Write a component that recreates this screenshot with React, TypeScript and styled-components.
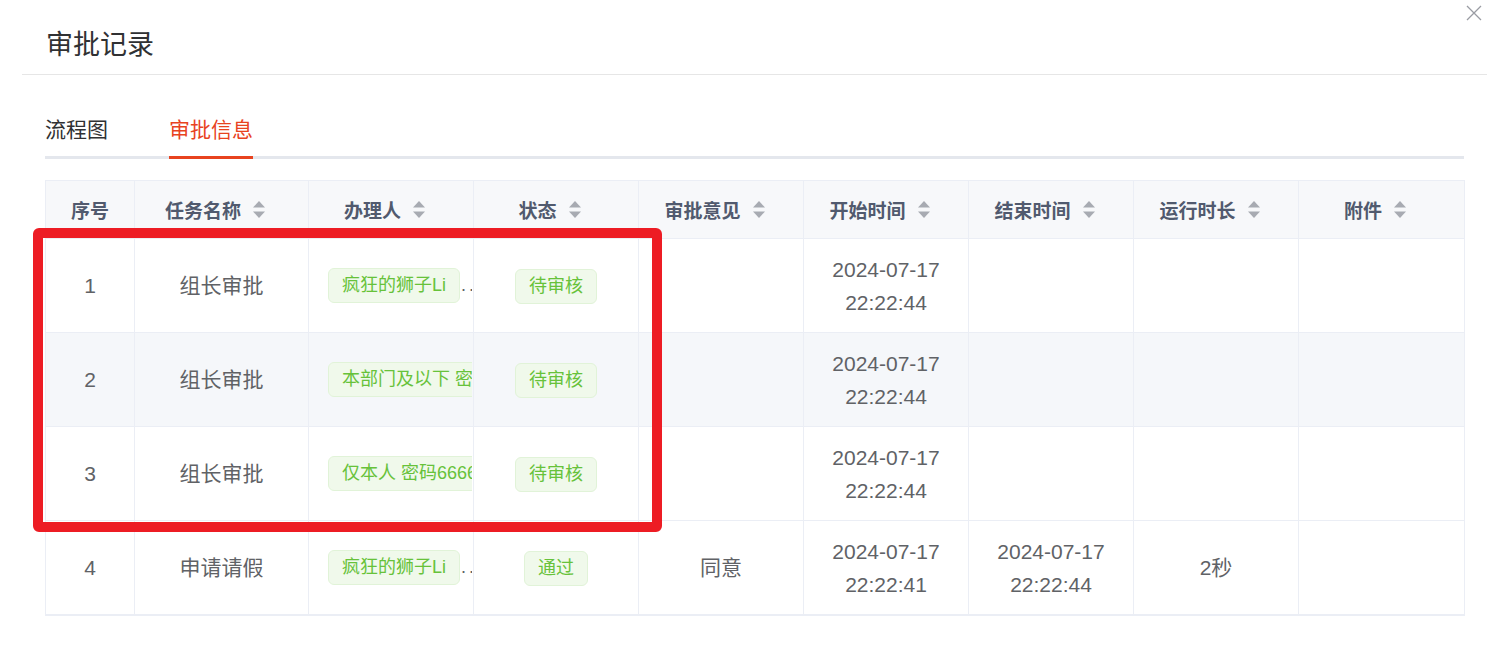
import styled, { createGlobalStyle } from 'styled-components';

const GlobalStyle = createGlobalStyle`
    body {
        margin: 0;
        background: #fff;
        font-family: 'Liberation Sans', 'Noto Sans CJK SC', sans-serif;
    }
`;

interface ActiveProps {
    $active?: boolean;
}

interface CellProps {
    $align?: 'left' | 'center';
}

interface HeadProps {
    $sortable?: boolean;
}

interface RowProps {
    $striped?: boolean;
}

const Dialog = styled.div`
    position: relative;
    width: 1495px;
    height: 650px;
    background: #fff;
    overflow: hidden;
`;

const Header = styled.div`
    margin: 0 8px 0 22px;
    height: 74px;
    padding-left: 24px;
    border-bottom: 1px solid #e6e6e6;
    box-sizing: content-box;
`;

const Title = styled.h2`
    margin: 0;
    padding-top: 27px;
    font-size: 27px;
    line-height: 36px;
    font-weight: 400;
    color: #303133;
`;

const CloseButton = styled.button`
    position: absolute;
    top: 4px;
    right: 12px;
    width: 18px;
    height: 18px;
    padding: 0;
    border: none;
    background: transparent;
    display: flex;
    align-items: center;
    justify-content: center;
    cursor: pointer;
`;

const Body = styled.div`
    padding: 35px 31px 0 45px;
`;

const TabNav = styled.div`
    display: flex;
    gap: 61px;
    border-bottom: 3px solid #e4e7ed;
`;

const Tab = styled.div<ActiveProps>`
    height: 46px;
    line-height: 40px;
    font-size: 21px;
    color: ${(props) => (props.$active ? '#e8431f' : '#303133')};
    box-shadow: ${(props) => (props.$active ? 'inset 0 -3px 0 #e8431f' : 'none')};
    margin-bottom: -3px;
    padding-bottom: 3px;
    box-sizing: content-box;
`;

const TableWrap = styled.div`
    position: relative;
    margin-top: 21px;
    width: 1419px;
`;

const Table = styled.table`
    width: 100%;
    table-layout: fixed;
    border-collapse: collapse;
    border: 1px solid #ebeef5;
    border-bottom: 2px solid #ebeef5;
`;

const HeadCell = styled.th<HeadProps>`
    height: 57px;
    padding: ${(props) => (props.$sortable ? '0 20px 0 8px' : '0 8px')};
    background: #f7f8fa;
    border: 1px solid #ebeef5;
    font-size: 19px;
    font-weight: 700;
    color: #515a6e;
    text-align: center;
    white-space: nowrap;
`;

const HeadInner = styled.span`
    display: inline-flex;
    align-items: center;
    gap: 11px;
`;

const Row = styled.tr<RowProps>`
    background: ${(props) => (props.$striped ? '#f5f7fa' : '#fff')};
`;

const Cell = styled.td<CellProps>`
    height: 93px;
    padding: 0 18px;
    border: 1px solid #ebeef5;
    font-size: 21px;
    line-height: 33px;
    color: #606266;
    text-align: ${(props) => props.$align || 'center'};
`;

const Clip = styled.div`
    margin-left: 1px;
    margin-right: -17px;
    white-space: nowrap;
    overflow: hidden;
    display: flex;
    align-items: center;
`;

const Tag = styled.span`
    flex-shrink: 0;
    display: inline-flex;
    align-items: center;
    height: 33px;
    padding: 0 13px;
    border: 1px solid #e1f3d8;
    border-radius: 6px;
    background: #f0f9eb;
    color: #67c23a;
    font-size: 18px;
    white-space: nowrap;
`;

const More = styled.span`
    margin-left: 1px;
    font-size: 18px;
    letter-spacing: 3px;
    color: #606266;
`;

const Mark = styled.div`
    position: absolute;
    left: -12px;
    top: 48px;
    width: 629px;
    height: 304px;
    box-sizing: border-box;
    border: 10px solid #ed1c24;
    border-radius: 6px;
    pointer-events: none;
`;

const SortIcon = () => (
    <svg width='14' height='17' viewBox='0 0 14 17'>
        <path d='M7 0 L13 6.5 L1 6.5 Z' fill='#a8abb2' />
        <path d='M7 17 L13 10.5 L1 10.5 Z' fill='#a8abb2' />
    </svg>
);

const CloseIcon = () => (
    <svg width='16' height='16' viewBox='0 0 16 16'>
        <path d='M1 1 L15 15 M15 1 L1 15' stroke='#9a9ca3' strokeWidth='1.3' fill='none' />
    </svg>
);

const columns = [
    { title: '序号', width: 89, sort: false },
    { title: '任务名称', width: 174, sort: true },
    { title: '办理人', width: 165, sort: true },
    { title: '状态', width: 165, sort: true },
    { title: '审批意见', width: 165, sort: true },
    { title: '开始时间', width: 165, sort: true },
    { title: '结束时间', width: 165, sort: true },
    { title: '运行时长', width: 165, sort: true },
    { title: '附件', width: 166, sort: true },
];

const records = [
    { no: 1, name: '组长审批', user: '疯狂的狮子Li', more: true, status: '待审核', comment: '', start: '2024-07-17 22:22:44', end: '', duration: '', striped: false },
    { no: 2, name: '组长审批', user: '本部门及以下 密码666666', more: false, status: '待审核', comment: '', start: '2024-07-17 22:22:44', end: '', duration: '', striped: true },
    { no: 3, name: '组长审批', user: '仅本人 密码666666', more: false, status: '待审核', comment: '', start: '2024-07-17 22:22:44', end: '', duration: '', striped: false },
    { no: 4, name: '申请请假', user: '疯狂的狮子Li', more: true, status: '通过', comment: '同意', start: '2024-07-17 22:22:41', end: '2024-07-17 22:22:44', duration: '2秒', striped: false },
];

const App = () => {
    return (
        <Dialog>
            <GlobalStyle />
            <Header>
                <Title>审批记录</Title>
            </Header>
            <CloseButton aria-label='关闭'>
                <CloseIcon />
            </CloseButton>
            <Body>
                <TabNav>
                    <Tab>流程图</Tab>
                    <Tab $active>审批信息</Tab>
                </TabNav>
                <TableWrap>
                    <Table>
                        <colgroup>
                            {columns.map((col) => (
                                <col key={col.title} style={{ width: col.width }} />
                            ))}
                        </colgroup>
                        <thead>
                            <tr>
                                {columns.map((col) => (
                                    <HeadCell key={col.title} $sortable={col.sort}>
                                        <HeadInner>
                                            {col.title}
                                            {col.sort && <SortIcon />}
                                        </HeadInner>
                                    </HeadCell>
                                ))}
                            </tr>
                        </thead>
                        <tbody>
                            {records.map((r) => (
                                <Row key={r.no} $striped={r.striped}>
                                    <Cell>{r.no}</Cell>
                                    <Cell>{r.name}</Cell>
                                    <Cell $align='left'>
                                        <Clip>
                                            <Tag>{r.user}</Tag>
                                            {r.more && <More>...</More>}
                                        </Clip>
                                    </Cell>
                                    <Cell>
                                        <Tag>{r.status}</Tag>
                                    </Cell>
                                    <Cell>{r.comment}</Cell>
                                    <Cell>{r.start}</Cell>
                                    <Cell>{r.end}</Cell>
                                    <Cell>{r.duration}</Cell>
                                    <Cell />
                                </Row>
                            ))}
                        </tbody>
                    </Table>
                    <Mark />
                </TableWrap>
            </Body>
        </Dialog>
    );
};

export default App;
